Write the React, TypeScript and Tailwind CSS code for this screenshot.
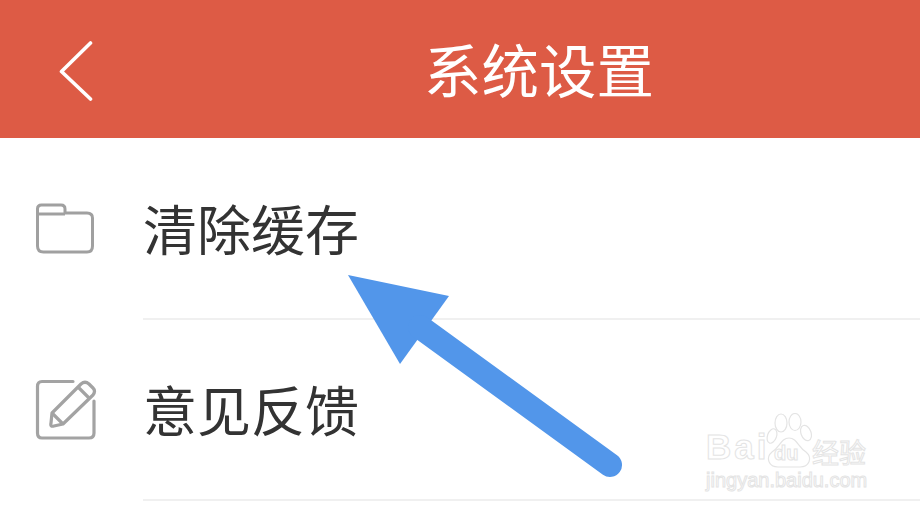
import React from "react";

const cjk = "font-['Noto_Sans_CJK_SC','Liberation_Sans',sans-serif]";
const outline = "text-transparent [-webkit-text-stroke:1px_#e4e4e4] leading-none whitespace-nowrap";

const FolderIcon = () => (
  <svg width="60" height="51" viewBox="0 0 60 51" fill="none" stroke="#a0a0a0" strokeWidth="3">
    <path d="M2.500 43V6Q2.500 2 6.500 2H26Q30 2 30 6V10H52Q57.500 10 57.500 15V43Q57.500 49 52 49H8.500Q2.500 49 2.500 43Z" />
    <path d="M2.500 11H30" />
  </svg>
);

const EditIcon = () => (
  <svg width="62" height="62" viewBox="0 0 62 62" fill="none" stroke="#a3a3a3" strokeWidth="3.2">
    <path d="M38 2.500H7Q2.500 2.500 2.500 7.500V54Q2.500 59 7 59H54Q59 59 59 54V22" strokeLinecap="round" />
    <path d="M17 34L46 5Q50 1.500 54 5L58 9Q61 12 58 16L28 45L19 47Q15 48 16 44Z" strokeLinejoin="round" />
    <path d="M43 8L54 19" />
    <path d="M17 34L28 45" />
  </svg>
);

const Row = ({ icon, label }: { icon: React.ReactNode; label: string }) => (
  <div className="h-[181px] flex flex-col">
    <div className="flex-1 flex items-center">
      <div className="w-[143px] pl-[35px] flex shrink-0">{icon}</div>
      <span className="text-[54px] leading-none text-[#333333] -mt-[1px]">{label}</span>
    </div>
    <div className="ml-[143px] h-[2px] bg-[#f0f0f0]" />
  </div>
);

const Watermark = () => (
  <div className="absolute left-[706px] top-[413px] w-[164px] flex flex-col">
    <div className="flex items-end h-[55px]">
      <span className={`w-[60px] text-[35px] tracking-[3px] font-['Liberation_Sans',sans-serif] font-bold mb-[4px] ${outline}`}>Bai</span>
      <div className="relative w-[46px] h-[55px] shrink-0">
        <svg width="46" height="55" viewBox="0 0 46 55" fill="#ffffff" stroke="#e4e4e4" strokeWidth="1.200">
          <ellipse cx="15" cy="10" rx="6" ry="9" />
          <ellipse cx="29" cy="9" rx="6" ry="8.500" />
          <ellipse cx="40" cy="20" rx="5" ry="8" transform="rotate(-20 40 20)" />
          <ellipse cx="6" cy="23" rx="4.500" ry="7.500" transform="rotate(20 6 23)" />
          <path d="M23 25C15 25 14 34 6 39C-1 45 3 54 12 54C18 54 28 54 34 54C43 54 47 45 40 39C32 34 31 25 23 25Z" />
        </svg>
        <span className={`absolute left-[8px] bottom-[5px] text-[20px] font-['Liberation_Sans',sans-serif] font-bold ${outline}`}>du</span>
      </div>
      <span className={`text-[27px] mb-[3px] ${outline}`}>经验</span>
    </div>
    <span className={`text-[20px] mt-[2px] font-['Liberation_Sans',sans-serif] ${outline}`}>jingyan.baidu.com</span>
  </div>
);

export default function App() {
  return (
    <div className={`relative w-[920px] h-[512px] overflow-hidden bg-white ${cjk}`}>
      <div className="h-[138px] bg-[#dd5b45] flex items-center pl-[59px]">
        <svg width="34" height="62" viewBox="0 0 34 62" fill="none" stroke="#ffffff" strokeWidth="3.600" strokeLinecap="round" strokeLinejoin="round" className="mt-[3px]">
          <path d="M31.500 3L2.500 31.500L31.500 59" />
        </svg>
        <h1 className="ml-[331px] text-[57.500px] leading-none text-white font-normal -mt-[1px] whitespace-nowrap">系统设置</h1>
      </div>
      <div className="pt-[1px]">
        <Row icon={<FolderIcon />} label="清除缓存" />
        <Row icon={<EditIcon />} label="意见反馈" />
      </div>

      {/* arrow drawn over the list */}
      <svg className="absolute left-0 top-0" width="920" height="512" viewBox="0 0 920 512" fill="none">
        <path d="M348 275L449 296L400 364Z" fill="#5296ea" />
        <path d="M420 327L610 465" stroke="#5296ea" strokeWidth="24" strokeLinecap="round" />
      </svg>

      <Watermark />
    </div>
  );
}
